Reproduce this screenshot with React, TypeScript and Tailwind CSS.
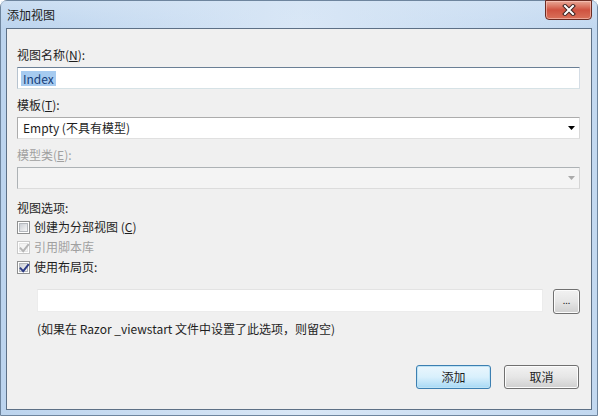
import React from "react";

function Label({ children, disabled }: { children: React.ReactNode; disabled?: boolean }) {
  return (
    <div className={`h-4 leading-4 text-[12px] ${disabled ? "text-[#a0a0a0]" : "text-[#1e1e1e]"}`}>
      {children}
    </div>
  );
}

function Checkbox({ checked, disabled }: { checked?: boolean; disabled?: boolean }) {
  return (
    <div
      className={`relative w-[13px] h-[13px] border p-px bg-white ${
        disabled ? "border-[#c9c9c9]" : "border-[#8e8f8f]"
      }`}
    >
      <div
        className={`w-full h-full border ${
          disabled
            ? "border-[#e6e6e6] bg-[#f4f4f4]"
            : "border-[#b4b8bd] bg-gradient-to-br from-[#cbcfd5] to-[#f6f6f6]"
        }`}
      />
      {checked && (
        <svg className="absolute left-0 top-0" width="13" height="13" viewBox="0 0 13 13">
          <path
            d="M2.6 6.4 L5.2 9.2 L10.2 2.8"
            fill="none"
            stroke={disabled ? "#b5b5b5" : "#2c3b86"}
            strokeWidth="1.9"
            strokeLinecap="square"
          />
        </svg>
      )}
    </div>
  );
}

function Arrow({ color }: { color: string }) {
  return (
    <svg width="7" height="4" viewBox="0 0 7 4">
      <path d="M0 0 H7 L3.5 4 Z" fill={color} />
    </svg>
  );
}

function Button({ children, primary, className }: { children: React.ReactNode; primary?: boolean; className?: string }) {
  return (
    <div
      className={`rounded-[3px] border flex items-center justify-center text-[12px] text-[#1e1e1e] ${
        primary
          ? "border-[#3c7fb1] bg-gradient-to-b from-[#eaf6fd] via-[#d9f0fc] to-[#a7d9f5] shadow-[inset_0_0_0_1px_#bfe3f5]"
          : "border-[#707070] bg-gradient-to-b from-[#f2f2f2] via-[#e6e6e6] to-[#cfcfcf] shadow-[inset_0_0_0_1px_#fcfcfc]"
      } ${className ?? ""}`}
    >
      {children}
    </div>
  );
}

export default function App() {
  return (
    <div className="w-[598px] h-[416px] font-['Noto_Sans_CJK_SC','Noto_Sans',sans-serif]">
      <div className="relative w-full h-full flex flex-col rounded-t-[7px] border border-[#6e859e] bg-gradient-to-r from-[#bcd4ee] via-[#d9e7f6] to-[#c2d8f0]">
        {/* title bar */}
        <div className="h-[27px] pl-[6px] flex items-center bg-gradient-to-b from-[#d6e5f5]/60 to-transparent">
          <span className="text-[12px] leading-4 text-[#1a1a1a] mt-[1px]">添加视图</span>
        </div>
        {/* close button */}
        <div className="absolute right-[5px] -top-px w-[47px] h-[20px] rounded-b-[4px] border border-[#6b2b22] bg-gradient-to-b from-[#e8a897] via-[#cf5240] to-[#d9715a] shadow-[inset_0_0_0_1px_rgba(255,210,200,0.55)] flex items-center justify-center">
          <svg width="14" height="12" viewBox="0 0 14 12">
            <path d="M3 2 L11 10 M11 2 L3 10" stroke="#3b2321" strokeWidth="4" strokeLinecap="square" />
            <path d="M3 2 L11 10 M11 2 L3 10" stroke="#ffffff" strokeWidth="2" strokeLinecap="square" />
          </svg>
        </div>

        {/* client */}
        <div className="flex-1 mx-[5px] mb-[5px] border border-[#5d7086] bg-[#f0f0f0] pl-[10px] pr-[11px] pt-[18px] flex flex-col">
          <Label>
            视图名称(<span className="underline">N</span>):
          </Label>
          <div className="mt-[4px] h-[22px] bg-white border border-t-[#6a7f95] border-l-[#b7c3cf] border-r-[#d5dde5] border-b-[#d6e2e6] flex items-center pl-[3px]">
            <span className="text-[12px] leading-[15px] px-[2px] bg-[#a6cbf0] text-[#16407a]">Index</span>
          </div>

          <div className="mt-[8px]">
            <Label>
              模板(<span className="underline">T</span>):
            </Label>
          </div>
          <div className="mt-[4px] h-[22px] bg-white border border-[#acacac] border-b-[#e0e0e0] border-r-[#d9d9d9] flex items-center justify-between pl-[5px] pr-[4px]">
            <span className="text-[12px] text-[#1e1e1e]">Empty (不具有模型)</span>
            <Arrow color="#000000" />
          </div>

          <div className="mt-[8px]">
            <Label disabled>
              模型类(<span className="underline">E</span>):
            </Label>
          </div>
          <div className="mt-[4px] h-[22px] bg-[#f4f4f4] border border-[#adb2b5] border-b-[#dcdcdc] border-r-[#d5d5d5] flex items-center justify-end pr-[4px]">
            <Arrow color="#aaaaaa" />
          </div>

          <div className="mt-[11px]">
            <Label>视图选项:</Label>
          </div>
          <div className="mt-[3px] h-4 flex items-center gap-[4px]">
            <Checkbox />
            <span className="text-[12px] text-[#1e1e1e]">
              创建为分部视图 (<span className="underline">C</span>)
            </span>
          </div>
          <div className="mt-[4px] h-4 flex items-center gap-[4px]">
            <Checkbox checked disabled />
            <span className="text-[12px] text-[#a0a0a0]">引用脚本库</span>
          </div>
          <div className="mt-[4px] h-4 flex items-center gap-[4px]">
            <Checkbox checked />
            <span className="text-[12px] text-[#1e1e1e]">使用布局页:</span>
          </div>

          <div className="mt-[14px] pl-[20px] flex items-start gap-[10px]">
            <div className="flex-1 h-[23px] bg-white border border-t-[#e3e3e3] border-l-[#ececec] border-r-[#ececec] border-b-[#ececec]" />
            <Button className="w-[27px] h-[25px]">
              <span className="text-[9px] leading-none -mt-[2px]">...</span>
            </Button>
          </div>
          <div className="mt-[7px] pl-[20px] h-4 leading-4 text-[12px] text-[#1e1e1e]">
            (如果在 Razor _viewstart 文件中设置了此选项，则留空)
          </div>

          <div className="mt-[28px] flex justify-end gap-[13px] pr-px">
            <Button primary className="w-[75px] h-[24px]">添加</Button>
            <Button className="w-[75px] h-[24px]">取消</Button>
          </div>
        </div>
      </div>
    </div>
  );
}
